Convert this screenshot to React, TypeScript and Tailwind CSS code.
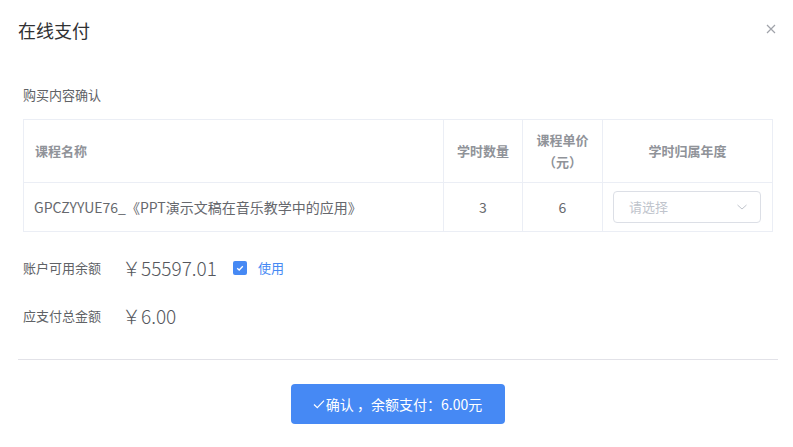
import React from 'react'

const font = { fontFamily: '"Noto Sans CJK SC", "Liberation Sans", sans-serif' }

function Checkbox() {
  return (
    <span className="w-[14px] h-[14px] rounded-[2px] bg-[#4689f4] flex items-center justify-center">
      <svg width="10" height="10" viewBox="0 0 10 10" fill="none">
        <path d="M2.2 5.2 L4.2 7 L7.8 3.2" stroke="white" strokeWidth="1.3" />
      </svg>
    </span>
  )
}

export default function App() {
  return (
    <div
      className="w-[793px] h-[447px] bg-white text-[#606266] flex flex-col"
      style={font}
    >
      <div className="flex items-center justify-between pl-[18px] pr-[17px] pt-[16px] h-[44px]">
        <h2 className="text-[18px] leading-[24px] text-[#303133]">在线支付</h2>
        <svg width="10" height="10" viewBox="0 0 10 10" className="mt-[-2px]">
          <path d="M1 1 L9 9 M9 1 L1 9" stroke="#a0a3aa" strokeWidth="1.2" />
        </svg>
      </div>

      <div className="px-[23px] pt-[42px]">
        <div className="text-[13px] leading-[18px] text-[#606266]">购买内容确认</div>

        <div className="mt-[15px] w-[750px] border border-[#ebeef5]">
          <div className="flex h-[63px] border-b border-[#ebeef5] text-[13px] font-bold text-[#909399]">
            <div className="w-[419px] flex items-center pl-[11px]">课程名称</div>
            <div className="w-[79px] border-l border-[#ebeef5] flex items-center justify-center">学时数量</div>
            <div className="w-[80px] border-l border-[#ebeef5] flex flex-col items-center justify-center leading-[22px]">
              <span>课程单价</span>
              <span>（元）</span>
            </div>
            <div className="flex-1 border-l border-[#ebeef5] flex items-center justify-center">学时归属年度</div>
          </div>
          <div className="flex h-[48px] text-[14px] text-[#66686d]">
            <div className="w-[419px] flex items-center pl-[10px]">GPCZYYUE76_《PPT演示文稿在音乐教学中的应用》</div>
            <div className="w-[79px] border-l border-[#ebeef5] flex items-center justify-center">3</div>
            <div className="w-[80px] border-l border-[#ebeef5] flex items-center justify-center">6</div>
            <div className="flex-1 border-l border-[#ebeef5] flex items-center pl-[10px]">
              <div className="w-[148px] h-[32px] rounded-[4px] border border-[#dcdfe6] flex items-center justify-between pl-[15px] pr-[12px] text-[13px] text-[#c0c4cc]">
                <span>请选择</span>
                <svg width="12" height="12" viewBox="0 0 12 12" fill="none">
                  <path d="M1.5 4 L6 8 L10.5 4" stroke="#c0c4cc" strokeWidth="1" />
                </svg>
              </div>
            </div>
          </div>
        </div>

        <div className="flex items-center h-[24px] mt-[24px]">
          <span className="w-[99px] text-[13px]">账户可用余额</span>
          <span className="text-[19px] leading-[24px] font-light text-[#55575c]">￥55597.01</span>
          <span className="ml-[16px] flex items-center gap-[11px]">
            <Checkbox />
            <span className="text-[13px] text-[#4689f4]">使用</span>
          </span>
        </div>

        <div className="flex items-center h-[24px] mt-[24px]">
          <span className="w-[99px] text-[13px]">应支付总金额</span>
          <span className="text-[19px] leading-[24px] font-light text-[#55575c]">￥6.00</span>
        </div>
      </div>

      <div className="ml-[18px] mr-[15px] mt-[31px] h-px bg-[#e2e2e8]" />

      <div className="flex justify-center pt-[24px] pl-[2px]">
        <button className="w-[214px] h-[40px] rounded-[4px] bg-[#4689f4] text-white text-[14px] flex items-center justify-center">
          <svg width="12" height="12" viewBox="0 0 12 12" fill="none" className="mr-[1px]">
            <path d="M1 6.5 L4.3 9.6 L11 2.6" stroke="white" strokeWidth="1.2" />
          </svg>
          <span>确认 ，余额支付：6.00元</span>
        </button>
      </div>
    </div>
  )
}
